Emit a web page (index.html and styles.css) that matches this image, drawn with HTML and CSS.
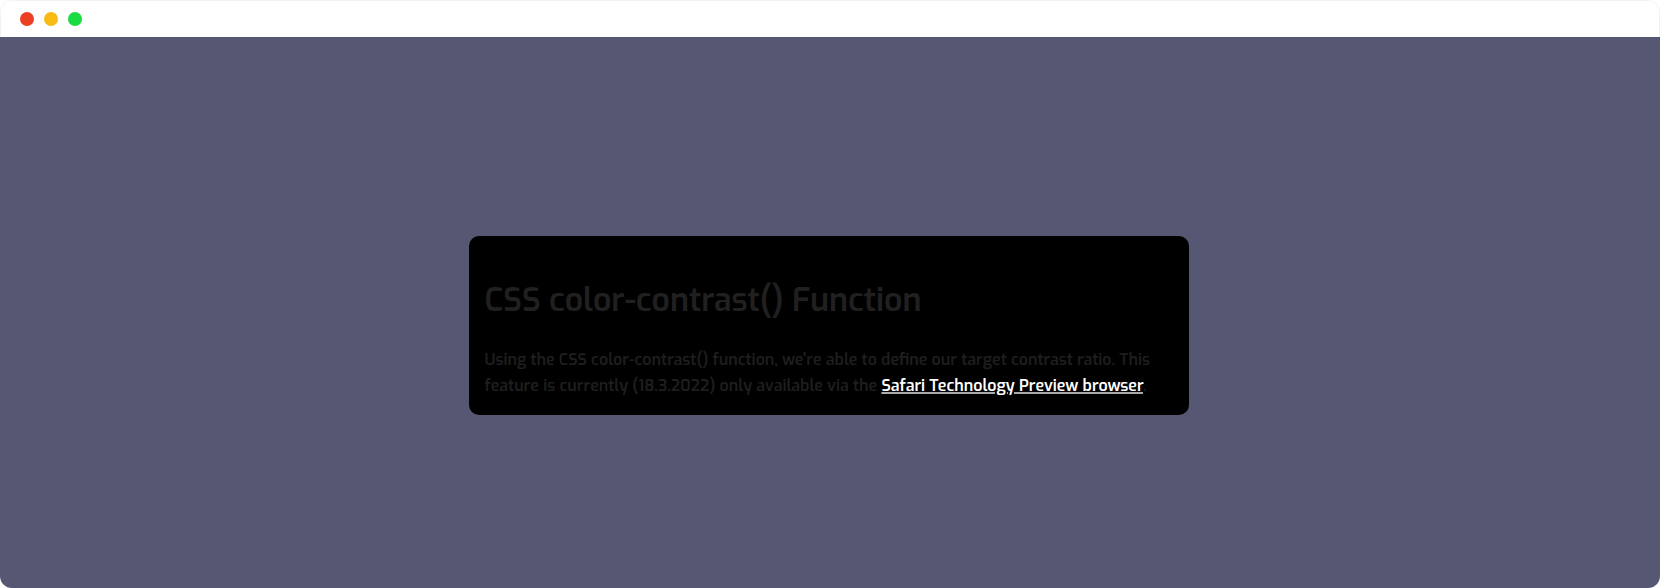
FILE: index.html
```html
<!DOCTYPE html>
<html lang="en">
<head>
<meta charset="utf-8">
<title>CSS color-contrast() Function</title>
<link rel="stylesheet" href="styles.css">
</head>
<body>
<div class="window">
  <header class="titlebar">
    <span class="dot dot-close"></span>
    <span class="dot dot-minimize"></span>
    <span class="dot dot-expand"></span>
  </header>
  <main class="viewport">
    <article class="card">
      <h1 class="title">CSS color-contrast() Function</h1>
      <p class="copy">Using the CSS color-contrast() function, we're able to define our target contrast ratio. This<br>feature is currently (18.3.2022) only available via the <a class="link">Safari Technology Preview browser</a>.</p>
    </article>
  </main>
</div>
</body>
</html>
```
FILE: styles.css
```css
* { box-sizing: border-box; }
body {
  margin: 0;
  background: #fff;
  font-family: Exo, "Exo 2", Roboto, sans-serif;
}
.window {
  height: 588px;
  display: flex;
  flex-direction: column;
  border-radius: 12px;
  overflow: hidden;
}
.titlebar {
  height: 37px;
  flex: none;
  display: flex;
  align-items: center;
  gap: 10px;
  padding: 0 0 0 19px;
  background: #fff;
  border: 1px solid #f2f2f2;
  border-bottom: 0;
  border-radius: 12px 12px 0 0;
}
.dot {
  width: 14px;
  height: 14px;
  border-radius: 50%;
}
.dot-close { background: #ec4024; }
.dot-minimize { background: #f8bb14; }
.dot-expand { background: #1bdb43; }
.viewport {
  flex: 1;
  display: flex;
  justify-content: center;
  align-items: flex-start;
  padding: 199px 2px 0 0;
  background: #565773;
}
.card {
  width: 720px;
  height: 179px;
  padding: 40px 16px 0 15.5px;
  border-radius: 10px;
  background: #000;
  color: #202020;
}
.title {
  margin: 0;
  font-size: 32px;
  font-weight: 600;
  line-height: 48px;
  white-space: nowrap;
}
.copy {
  margin: 22.5px 0 0;
  color: #1e1e1e;
  font-size: 16px;
  font-weight: 600;
  line-height: 26px;
  white-space: nowrap;
}
.link {
  color: #fff;
  text-decoration: underline;
  text-decoration-color: #aaa;
  text-decoration-thickness: 2px;
  text-underline-offset: 1px;
  text-decoration-skip-ink: auto;
}
```
